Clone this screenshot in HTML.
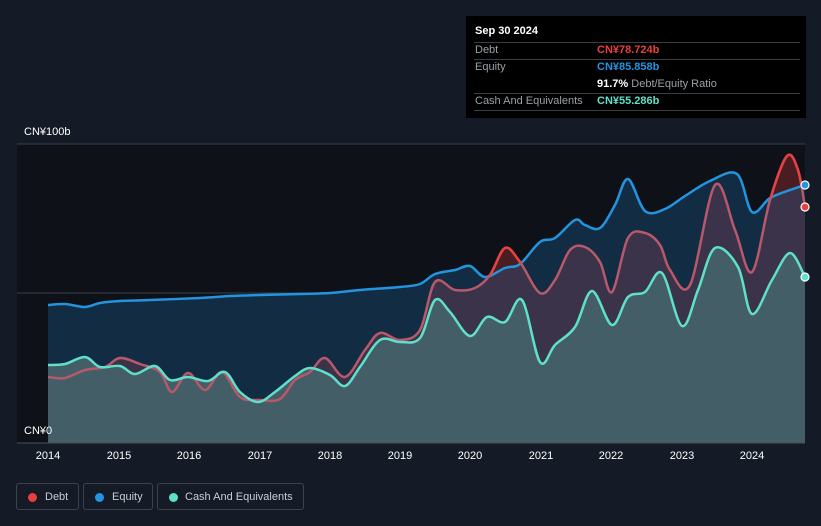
<!DOCTYPE html>
<html><head><meta charset="utf-8"><style>
html,body{margin:0;padding:0;background:#151b26;width:821px;height:526px;overflow:hidden;font-family:"Liberation Sans",sans-serif}
#tip{position:absolute;left:466px;top:16px;width:340px;height:102px;background:#000;color:#fff;font-size:11px}
.r{position:absolute;left:8px;right:6px;border-top:1px solid #3a3f47}
.l{position:absolute;left:9px;color:#9aa0a8}
.v{position:absolute;left:131px;font-weight:bold}
.yr{position:absolute;top:450px;color:#fff;font-size:11px;transform:translateX(-50%)}
.leg{position:absolute;top:483px;height:27px;border:1px solid #3d434c;border-radius:3px;color:#c9cdd2;font-size:11px;line-height:27px;box-sizing:border-box}
.leg i{position:absolute;left:11px;top:9px;width:9px;height:9px;border-radius:50%}
</style></head><body>
<svg id="s" width="821" height="526" style="position:absolute;left:0;top:0">
<rect x="17" y="144" width="788" height="299" fill="#0e1117"/>
<line x1="17" y1="144" x2="805" y2="144" fill="none" stroke="#3a3f47"/>
<line x1="17" y1="293" x2="805" y2="293" stroke="#3a3f47"/>
<defs><clipPath id="above"><path id="abovep"/></clipPath></defs>
<path id="ef" fill="#122c43"/>
<path id="df" fill="#3a3349"/>
<g clip-path="url(#above)"><path id="df2" fill="#4a1d22"/></g>
<path id="cf" fill="#435e67"/>
<path id="el" fill="none" stroke="#2394e0" stroke-width="2.5"/>
<path id="dl" fill="none" stroke="#b9586b" stroke-width="2.5"/>
<g clip-path="url(#above)"><path id="dl2" fill="none" stroke="#e8403f" stroke-width="2.5"/></g>
<path id="cl" fill="none" stroke="#5fe0c9" stroke-width="2.5"/>
<line x1="17" y1="443" x2="805" y2="443" stroke="#4a5058"/>
<circle cx="805" cy="185" r="4" fill="#2394e0" stroke="#fff" stroke-width="1.2"/>
<circle cx="805" cy="207" r="4" fill="#e8403f" stroke="#fff" stroke-width="1.2"/>
<circle cx="805" cy="277" r="4" fill="#5fe0c9" stroke="#fff" stroke-width="1.2"/>
</svg>
<div style="position:absolute;left:24px;top:126px;color:#fff;font-size:11px">CN¥100b</div>
<div style="position:absolute;left:24px;top:425px;color:#fff;font-size:11px">CN¥0</div>
<div class="yr" style="left:48px">2014</div><div class="yr" style="left:119px">2015</div><div class="yr" style="left:189px">2016</div><div class="yr" style="left:260px">2017</div><div class="yr" style="left:330px">2018</div><div class="yr" style="left:400px">2019</div><div class="yr" style="left:470px">2020</div><div class="yr" style="left:541px">2021</div><div class="yr" style="left:611px">2022</div><div class="yr" style="left:682px">2023</div><div class="yr" style="left:752px">2024</div>
<div class="leg" style="left:16px;width:63px"><i style="background:#e8403f"></i><span style="position:absolute;left:28px">Debt</span></div>
<div class="leg" style="left:83px;width:70px"><i style="background:#2394e0"></i><span style="position:absolute;left:28px">Equity</span></div>
<div class="leg" style="left:157px;width:147px"><i style="background:#5fe0c9"></i><span style="position:absolute;left:27px">Cash And Equivalents</span></div>
<div id="tip">
<div style="position:absolute;left:9px;top:9px;font-weight:bold;font-size:11px">Sep 30 2024</div>
<div class="r" style="top:26px"></div>
<div class="l" style="top:28px">Debt</div><div class="v" style="top:28px;color:#e8403f">CN¥78.724b</div>
<div class="r" style="top:43px"></div>
<div class="l" style="top:45px">Equity</div><div class="v" style="top:45px;color:#2394e0">CN¥85.858b</div>
<div style="position:absolute;left:131px;top:62px"><b>91.7%</b> <span style="color:#9aa0a8">Debt/Equity Ratio</span></div>
<div class="r" style="top:77px"></div>
<div class="l" style="top:79px">Cash And Equivalents</div><div class="v" style="top:79px;color:#5fe0c9">CN¥55.286b</div>
<div class="r" style="top:94px"></div>
</div>
<script>
var E=[[48,305],[65,304],[85,307],[100,303],[120,301],[150,300],[200,298],[230,296],[260,295],[300,294],[330,293],[360,290],[400,287],[420,284],[435,274],[455,270],[470,266],[485,277],[505,268],[520,264],[540,242],[555,238],[575,220],[585,225],[600,228],[615,205],[628,179],[645,211],[665,209],[685,196],[710,181],[737,174],[752,212],[770,198],[790,190],[805,185]];
var D=[[48,377],[65,378],[85,370],[105,367],[120,358],[140,364],[160,372],[172,392],[188,373],[205,390],[222,372],[240,397],[260,400],[280,399],[295,380],[310,372],[325,358],[345,377],[365,350],[380,333],[400,340],[420,330],[435,282],[455,290],[475,288],[490,275],[505,248],[520,262],[540,293],[555,280],[570,250],[585,247],[600,262],[612,292],[628,238],[645,233],[660,245],[670,270],[690,285],[715,185],[735,230],[752,272],[770,200],[787,156],[798,170],[805,207]];
var C=[[48,365],[65,364],[85,357],[100,367],[120,366],[135,374],[155,366],[170,380],[188,377],[208,381],[225,372],[240,392],[258,402],[275,392],[295,376],[310,368],[330,375],[345,386],[360,367],[380,340],[400,342],[420,338],[435,300],[450,312],[470,336],[487,317],[505,322],[522,300],[540,362],[555,345],[575,327],[592,291],[612,325],[628,297],[645,292],[662,273],[682,326],[698,290],[715,248],[738,267],[752,314],[772,280],[790,253],[805,277]];
function sp(P){var d="M"+P[0][0]+","+P[0][1];for(var i=0;i<P.length-1;i++){var p0=P[i-1]||P[i],p1=P[i],p2=P[i+1],p3=P[i+2]||p2;var t=6;d+=" C"+(p1[0]+(p2[0]-p0[0])/t)+","+(p1[1]+(p2[1]-p0[1])/t)+" "+(p2[0]-(p3[0]-p1[0])/t)+","+(p2[1]-(p3[1]-p1[1])/t)+" "+p2[0]+","+p2[1];}return d;}
function g(id,d){document.getElementById(id).setAttribute("d",d);}
var e=sp(E),dd=sp(D),c=sp(C),cl=" L805,443 L48,443 Z";
g("ef",e+cl);g("df",dd+cl);g("df2",dd+cl);g("cf",c+cl);
g("el",e);g("dl",dd);g("dl2",dd);g("cl",c);
g("abovep",e+" L805,0 L48,0 Z");
</script>
</body></html>
